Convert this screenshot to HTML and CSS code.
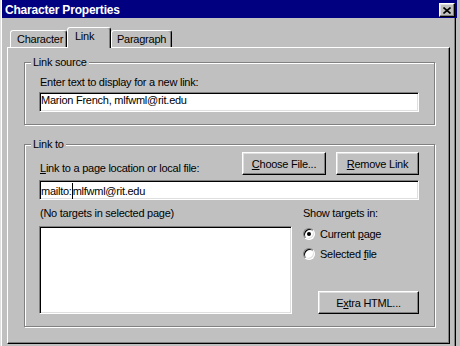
FILE: index.html
```html
<!DOCTYPE html>
<html lang="en">
<head>
    <meta charset="UTF-8">
    <meta name="viewport" content="width=device-width, initial-scale=1.0">
    <title>Character Properties</title>
    <link rel="stylesheet" href="styles.css">
</head>
<body>
    <div class="window">
        <div class="titlebar">
            <span class="title">Character Properties</span>
            <span class="close">
                <svg width="8" height="7" viewBox="0 0 8 7">
                    <path d="M0.5 0.5 L7.5 6.5 M7.5 0.5 L0.5 6.5" stroke="#000" stroke-width="1.6" fill="none"/>
                </svg>
            </span>
        </div>

        <div class="dialog">
            <div class="tabs">
                <div class="tab tab-character">Character</div>
                <div class="tab tab-link active">Link</div>
                <div class="tab tab-paragraph">Paragraph</div>
            </div>

            <div class="panel">
                <fieldset class="group group-source">
                    <legend>Link source</legend>
                    <div class="group-body">
                        <div class="label">Enter text to display for a new link:</div>
                        <div class="field">Marion French, mlfwml@rit.edu</div>
                    </div>
                </fieldset>

                <fieldset class="group group-target">
                    <legend>Link to</legend>
                    <div class="group-body">
                        <div class="file-row">
                            <div class="label"><u>L</u>ink to a page location or local file:</div>
                            <div class="buttons">
                                <button class="btn btn-choose"><u>C</u>hoose File...</button>
                                <button class="btn btn-remove"><u>R</u>emove Link</button>
                            </div>
                        </div>
                        <div class="field field-url">mailto:<span class="caret"></span>mlfwml@rit.edu</div>

                        <div class="targets">
                            <div class="targets-list">
                                <div class="label">(No targets in selected page)</div>
                                <div class="listbox"></div>
                            </div>
                            <div class="targets-options">
                                <div class="label">Show targets in:</div>
                                <div class="radio-row">
                                    <span class="radio checked"></span>
                                    <span>Current <u>p</u>age</span>
                                </div>
                                <div class="radio-row">
                                    <span class="radio"></span>
                                    <span>Selected <u>f</u>ile</span>
                                </div>
                                <button class="btn btn-extra">E<u>x</u>tra HTML...</button>
                            </div>
                        </div>
                    </div>
                </fieldset>
            </div>
        </div>
    </div>
</body>
</html>
```

FILE: styles.css
```css
body {
    margin: 0;
    background: #c0c0c0;
    font-family: "Liberation Sans", Arial, sans-serif;
    font-size: 11px;
    letter-spacing: -0.25px;
    color: #000;
}

.window {
    width: 458px;
    height: 346px;
    box-sizing: border-box;
    border-left: 1px solid #dfdfdf;
    padding-left: 1px;
    box-shadow: inset 1px 0 #fff;
    overflow: hidden;
}

.titlebar {
    width: 455px;
    height: 18px;
    box-sizing: border-box;
    padding: 0 2px 0 3px;
    background: #000080;
    color: #fff;
    display: flex;
    align-items: center;
    justify-content: space-between;
}

.title {
    font-weight: bold;
    font-size: 12px;
    letter-spacing: -0.2px;
    padding-top: 2px;
}

.close {
    width: 16px;
    height: 14px;
    margin-top: 2px;
    box-sizing: border-box;
    background: #c0c0c0;
    border: 1px solid;
    border-color: #fff #000 #000 #fff;
    box-shadow: inset -1px -1px #808080, inset 1px 1px #dfdfdf;
    display: flex;
    align-items: center;
    justify-content: center;
}

.dialog {
    width: 454px;
    height: 328px;
    box-sizing: border-box;
    padding: 9px 0 0 5px;
    border-right: 1px solid #000;
    box-shadow: inset -1px 0 #808080;
}

/* tabs */
.tabs {
    display: flex;
    align-items: flex-end;
    margin-left: 3px;
}

.tab {
    box-sizing: border-box;
    height: 17px;
    padding-top: 2px;
    line-height: 13px;
    background: #c0c0c0;
    border: 1px solid;
    border-bottom: none;
    border-color: #fff #000 transparent #fff;
    border-radius: 3px 3px 0 0;
    box-shadow: inset -1px 0 #808080;
}

.tab-character {
    width: 57px;
    padding-left: 6px;
}

.tab-link {
    width: 44px;
    padding-left: 7px;
}

.tab-paragraph {
    width: 61px;
    padding-left: 5px;
}

.tab.active {
    height: 21px;
    margin-bottom: -1px;
    position: relative;
    z-index: 1;
}

/* panel */
.panel {
    width: 443px;
    height: 297px;
    box-sizing: border-box;
    padding: 8px 0 0 16px;
    border: 1px solid;
    border-color: #fff #000 #000 #fff;
    box-shadow: inset -1px -1px #808080;
}

.group {
    width: 411px;
    box-sizing: border-box;
    margin: 0;
    padding: 0;
    border: 1px solid #808080;
    box-shadow: inset 1px 1px #fff, 1px 1px #fff;
}

.group legend {
    margin-left: 6px;
    padding: 0 2px;
    line-height: 13px;
    background: #c0c0c0;
}

.group-body {
    padding: 7px 15px 12px 14px;
}

.group-target {
    margin-top: 13px;
}

.group-target .group-body {
    padding-top: 1px;
}

.label {
    line-height: 13px;
    padding-left: 1px;
}

.field {
    height: 20px;
    margin-top: 3px;
    box-sizing: border-box;
    padding: 0 2px 2px 1px;
    line-height: 14px;
    background: #fff;
    border: 1px solid;
    border-color: #808080 #fff #fff #808080;
    box-shadow: inset 1px 1px #000, inset -1px -1px #dfdfdf;
    white-space: nowrap;
}

.field-url {
    margin-top: 5px;
    padding-top: 2px;
    padding-bottom: 0;
}

.caret {
    display: inline-block;
    width: 1px;
    height: 16px;
    background: #000;
    vertical-align: -4px;
}

.file-row {
    display: flex;
    align-items: flex-end;
    justify-content: space-between;
}

.buttons {
    display: flex;
    gap: 10px;
}

.btn {
    font: inherit;
    letter-spacing: inherit;
    color: #000;
    height: 23px;
    box-sizing: border-box;
    padding: 0;
    background: #c0c0c0;
    border: 1px solid;
    border-color: #fff #000 #000 #fff;
    box-shadow: inset -1px -1px #808080, inset 1px 1px #dfdfdf;
}

.btn-choose {
    width: 84px;
}

.btn-remove {
    width: 83px;
}

/* targets */
.targets {
    display: grid;
    grid-template-columns: 253px 1fr;
    column-gap: 11px;
    margin-top: 7px;
}

.listbox {
    height: 88px;
    margin-top: 6px;
    box-sizing: border-box;
    background: #fff;
    border: 1px solid;
    border-color: #808080 #fff #fff #808080;
    box-shadow: inset 1px 1px #000, inset -1px -1px #dfdfdf;
}

.targets-options {
    display: flex;
    flex-direction: column;
}

.targets-options .label {
    padding-left: 0;
    margin-bottom: 4px;
}

.radio-row {
    height: 20px;
    display: flex;
    align-items: center;
}

.radio {
    width: 12px;
    height: 12px;
    margin-right: 5px;
    box-sizing: border-box;
    border-radius: 50%;
    border: 1px solid;
    border-color: #808080 #fff #fff #808080;
    background: #fff;
    box-shadow: inset 1px 1px #000, inset -1px -1px #dfdfdf;
    display: flex;
    align-items: center;
    justify-content: center;
}

.radio.checked::after {
    content: "";
    width: 4px;
    height: 4px;
    border-radius: 50%;
    background: #000;
}

.btn-extra {
    width: 101px;
    margin: auto 0 0 15px;
}
```
